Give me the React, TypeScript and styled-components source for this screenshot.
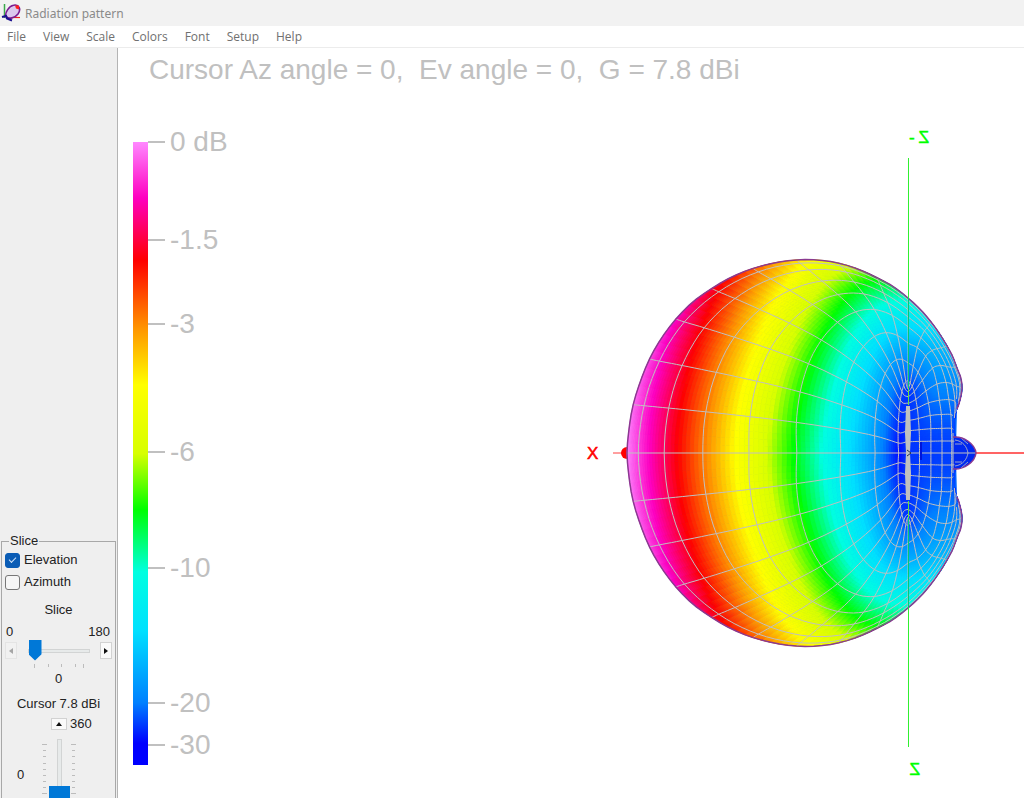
import React, { useState } from "react";
import styled, { createGlobalStyle } from "styled-components";

const GlobalStyle = createGlobalStyle`
  *, *::before, *::after { box-sizing: border-box; }
  html, body { margin: 0; height: 100%; overflow: hidden; background: #fff; }
  #root { height: 100%; }
`;

const Window = styled.div`
  display: flex;
  flex-direction: column;
  height: 100vh;
  overflow: hidden;
  font-family: "Liberation Sans", Arial, sans-serif;
  color: #222;
`;
const TitleBar = styled.header`
  flex: none;
  display: flex;
  align-items: center;
  gap: 4px;
  height: 26px;
  padding-left: 1px;
  background: #f2f2f2;
  font: 12px "Noto Sans", sans-serif;
  color: #8a8a8a;
`;
const MenuBar = styled.nav`
  flex: none;
  display: flex;
  gap: 17px;
  height: 22px;
  padding-left: 7px;
  border-bottom: 1px solid #ececec;
  background: #fff;
`;
const MenuItem = styled.button`
  padding: 0;
  border: 0;
  background: none;
  font: 12px "Open Sans", sans-serif;
  color: #707070;
`;
const Body = styled.div`
  flex: 1;
  display: flex;
  min-height: 0;
`;
const Sidebar = styled.aside`
  flex: none;
  width: 118px;
  padding: 485px 1px 0;
  overflow: hidden;
  background: #efefef;
  border-right: 1px solid #b4b4b4;
`;
const Group = styled.fieldset`
  display: flex;
  flex-direction: column;
  min-width: 0;
  margin: 0;
  height: 340px;
  padding: 0 3px;
  border: 1px solid #a8a8a8;
  font-size: 13px;
  line-height: 16px;
`;
const Legend = styled.legend`
  padding: 0 1px;
  margin-left: 4px;
  line-height: 16px;
`;
const CheckLabel = styled.label`
  display: flex;
  align-items: center;
  gap: 4px;
  height: 22px;
`;
const Check = styled.input`
  appearance: none;
  flex: none;
  width: 15px;
  height: 15px;
  margin: 0;
  border: 1px solid #777;
  border-radius: 3px;
  background: #f6f6f6;
  &:checked {
    border-color: #0a5cb5;
    background: #0a5cb5;
  }
  &:checked::after {
    content: "";
    display: block;
    width: 7px;
    height: 4px;
    margin: 3px 0 0 3px;
    border: solid #cfe3fa;
    border-width: 0 0 1px 1px;
    rotate: -45deg;
  }
`;
const Caption = styled.div<{ $top?: number }>`
  margin-top: ${(p) => p.$top ?? 0}px;
  text-align: center;
`;
const Ends = styled.div`
  display: flex;
  justify-content: space-between;
  margin-top: 6px;
  padding: 0 2px 0 1px;
`;
const SliderRow = styled.div`
  display: flex;
  align-items: center;
  justify-content: space-between;
  height: 21px;
`;
const Step = styled.button<{ $wide?: boolean }>`
  display: flex;
  align-items: center;
  justify-content: center;
  flex: none;
  width: ${(p) => (p.$wide ? 16 : 12)}px;
  height: ${(p) => (p.$wide ? 12 : 17)}px;
  padding: 0;
  border: 1px solid #d2d2d2;
  background: #fafafa;
  color: #111;
  &:disabled {
    border-color: #e4e4e4;
    background: #f1f1f1;
    color: #a5a5a5;
  }
`;
const HSlider = styled.input`
  appearance: none;
  width: 62px;
  height: 21px;
  margin: 0;
  background: none;
  &::-webkit-slider-runnable-track {
    height: 4px;
    border: 1px solid #d2d4d4;
    background: #e7eaea;
  }
  &::-webkit-slider-thumb {
    appearance: none;
    width: 13px;
    height: 21px;
    margin-top: -10px;
    background: #0078d7;
    clip-path: polygon(0 0, 100% 0, 100% 70%, 50% 100%, 0 70%);
  }
`;
const VRow = styled.div`
  display: flex;
  align-items: flex-start;
  gap: 2px;
  margin-top: 7px;
  padding-left: 12px;
`;
const Reading = styled.span`
  width: 23px;
  padding-top: 28px;
`;
const Tower = styled.div`
  display: flex;
  gap: 1px;
`;
const VSlider = styled.input`
  appearance: none;
  writing-mode: vertical-lr;
  direction: rtl;
  width: 22px;
  height: 60px;
  margin: 0;
  background: none;
  &::-webkit-slider-runnable-track {
    width: 5px;
    border: 1px solid #d2d4d4;
    background: #e7eaea;
  }
  &::-webkit-slider-thumb {
    appearance: none;
    width: 21px;
    height: 12px;
    margin-left: -9px;
    background: #0078d7;
  }
`;
const StepRow = styled.div`
  display: flex;
  align-items: center;
  gap: 3px;
  margin-top: 4px;
  padding-left: 46px;
`;
const Plot = styled.main`
  flex: 1;
  display: flex;
  flex-direction: column;
  min-width: 0;
  background: #fff;
`;
const Reading3D = styled.h1`
  flex: none;
  margin: 0;
  padding: 4px 0 0 31px;
  height: 50px;
  font-size: 28px;
  font-weight: 400;
  line-height: 36px;
  white-space: pre;
  color: #c0c0c0;
`;
const Chart = styled.svg`
  flex: 1;
  display: block;
  width: 100%;
  min-height: 0;
  font-family: "Liberation Sans", Arial, sans-serif;
`;

/* ---------- radiation surface ---------- */

const RAD = Math.PI / 180;
const RMAX = 281;

// Catmull-Rom interpolation in an evenly spaced table
const spline = (t: number[], pos: number) => {
  const i = Math.min(t.length - 2, Math.floor(pos));
  const k = pos - i;
  const b = t[i];
  const c = t[i + 1];
  const a = i > 0 ? t[i - 1] : b;
  const d = i + 2 < t.length ? t[i + 2] : c;
  return 0.5 * (2 * b + (c - a) * k + (2 * a - 5 * b + 4 * c - d) * k * k + (3 * b - a - 3 * c + d) * k * k * k);
};

// radius of the vertical cut, every 5 degrees of elevation from 0 to 180
const CUT = [
  281, 280, 279, 277, 275, 272, 268, 263, 256, 249, 241, 232, 223, 213, 202, 190, 178, 167,
  155, 144, 133, 123, 114, 106, 98, 92, 84, 73, 62, 57, 53, 49, 48, 58, 64, 67, 68,
];
// share of the cut's excess radius kept at each azimuth, level with the horizon and overhead
const SIDE = [1, 0.967, 0.9, 0.796, 0.66, 0.5, 0.32, 0.144, -0.05, 0];
const TOP = [1, 0.98, 0.94, 0.87, 0.79, 0.68, 0.5, 0.28, 0.08, 0];
// radii behind the antenna, rows for elevation 100 to 180, columns for azimuth 0 to 90
const REAR = [
  [133, 132, 130, 127, 124, 117, 107, 88, 71, 65],
  [114, 114, 113, 112, 111, 109, 103, 86, 71, 65],
  [98, 98, 99, 99, 100, 101, 98, 84, 71, 65],
  [84, 84, 86, 87, 90, 92, 90, 81, 70, 65],
  [62, 63, 67, 72, 80, 83, 82, 78, 70, 65],
  [53, 54, 56, 60, 70, 77, 77, 75, 69, 65],
  [48, 50, 53, 57, 64, 72, 72, 71, 68, 65],
  [64, 64, 65, 66, 66, 69, 69, 68, 67, 65],
  [68, 68, 68, 68, 68, 68, 68, 67, 66, 65],
];
const GRID: number[][] = [];
for (let e = 0; e <= 9; e++) {
  GRID.push(SIDE.map((s, a) => 65 + (CUT[e * 2] - 65) * (s + ((TOP[a] - s) * e) / 9)));
}
GRID.push(...REAR);

const radius = (el: number, az: number) => {
  const row = Math.abs(el) / 10;
  if (az === 0) return spline(CUT, row * 2);
  const i = Math.min(17, Math.floor(row));
  const [a, b, c, d] = [i - 1, i, i + 1, i + 2].map((n) => spline(GRID[Math.max(0, Math.min(18, n))], az / 10));
  const k = row - i;
  return 0.5 * (2 * b + (c - a) * k + (2 * a - 5 * b + 4 * c - d) * k * k + (3 * b - a - 3 * c + d) * k * k * k);
};
const project = (el: number, az: number) => {
  const f = radius(el, az);
  return [-f * Math.cos(el * RAD) * Math.cos(az * RAD), -f * Math.sin(el * RAD), f];
};

const STOPS: [number, number, number, number][] = [
  [0, 255, 136, 255], [0.09, 255, 0, 192], [0.19, 255, 0, 0], [0.3, 255, 150, 0], [0.39, 255, 255, 0],
  [0.5, 215, 255, 0], [0.59, 0, 255, 0], [0.69, 0, 255, 224], [0.785, 0, 224, 255], [0.9, 0, 128, 255],
  [0.965, 0, 0, 255], [1, 0, 0, 255],
];
const colorAt = (f: number) => {
  const t = 1 - Math.min(1, (f / RMAX) ** 1.9);
  for (let i = 1; i < STOPS.length; i++) {
    if (t <= STOPS[i][0]) {
      const a = STOPS[i - 1];
      const b = STOPS[i];
      const k = (t - a[0]) / (b[0] - a[0]);
      return `rgb(${[1, 2, 3].map((c) => Math.round(a[c] + (b[c] - a[c]) * k)).join(",")})`;
    }
  }
  return "rgb(0,0,255)";
};

const pt = (p: number[]) => `${p[0].toFixed(1)},${p[1].toFixed(1)}`;

const EL_STEP = 2;
const cells: { d: string; fill: string }[] = [];
for (let az = 0; az < 90; az += 1) {
  const limit = az < 40 ? 144 : 180;
  for (let el = -limit; el < limit; el += EL_STEP) {
    const q = [project(el, az), project(el + EL_STEP, az), project(el + EL_STEP, az + 1), project(el, az + 1)];
    cells.push({
      d: q.map(pt).join(" "),
      fill: colorAt((q[0][2] + q[1][2] + q[2][2] + q[3][2]) / 4),
    });
  }
}

const meshLines: string[] = [];
for (let az = 10; az <= 80; az += 10) {
  const limit = az < 40 ? 136 : az === 40 ? 150 : 180;
  const pts: string[] = [];
  for (let el = -limit; el <= limit; el += 2) pts.push(pt(project(el, az)));
  meshLines.push(pts.join(" "));
}
for (let el = -170; el < 180; el += 10) {
  if (el === 0) continue;
  const pts: string[] = [];
  for (let az = Math.abs(el) > 145 ? 46 : 0; az <= 90; az += 2) pts.push(pt(project(el, az)));
  meshLines.push(pts.join(" "));
}

const cutPoints: string[] = [];
for (let el = -138; el <= 138; el += 2) cutPoints.push(pt(project(el, 0)));
const OUTLINE = cutPoints.join(" ");
const BODY = `${OUTLINE} 47,34 45,20 45,-20 47,-34`;
const LOBE = "M45,-16 C56,-17 67,-9 68,0 C67,9 56,17 45,16";

const Surface = () => (
  <g>
    <polygon points={BODY} fill="#0064ff" />
    {cells.map((c, i) => (
      <polygon key={i} points={c.d} fill={c.fill} stroke={c.fill} strokeWidth={0.8} />
    ))}
    <path d={LOBE} fill="#0028f0" />
    <g fill="none" stroke="#c0c0c0" strokeWidth={1}>
      {meshLines.map((p, i) => (
        <polyline key={i} points={p} />
      ))}
      <path d="M47,-13 C55,-12 59,-6 60,0 C59,6 55,12 47,13 M47,-9 H54 M47,9 H54 M53,-15 L60,-9 M53,15 L60,9" strokeWidth={0.8} />
      <path d="M45,-20 V20 M-281,0 H68" />
    </g>
    <path d="M13,-11 V7" stroke="#0014d8" strokeWidth={2} />
    <polyline points={OUTLINE} fill="none" stroke="#8a3a90" strokeWidth={1.5} />
    <path d={LOBE} fill="none" stroke="#8a3a90" strokeWidth={1.5} />
    <path d="M-1,-46 H1 L2,-20 L1,0 L2,20 L1,46 H-1 L-2,20 L-1,0 L-2,-20 Z" fill="#c0c0c0" stroke="#c0c0c0" strokeWidth={2} />
    <path d="M-1,-3 L3,0 L-1,3" fill="none" stroke="#203050" strokeWidth={1} />
  </g>
);

const TICKS: [number, string][] = [
  [0, "0 dB"], [98, "-1.5"], [182, "-3"], [310, "-6"], [426, "-10"], [561, "-20"], [603, "-30"],
];

const Scale = () => (
  <g>
    <defs>
      <linearGradient id="gain" x1="0" y1="0" x2="0" y2="1">
        {STOPS.map(([o, r, g, b]) => (
          <stop key={o} offset={o} stopColor={`rgb(${r},${g},${b})`} />
        ))}
      </linearGradient>
    </defs>
    <rect width={15} height={623} fill="url(#gain)" />
    {TICKS.map(([y, label]) => (
      <g key={label}>
        <path d={`M15,${y} h17`} stroke="#c0c0c0" strokeWidth={2} />
        <text x={37} y={y + 9} fontSize={28} fill="#c0c0c0">
          {label}
        </text>
      </g>
    ))}
  </g>
);

const AppIcon = () => (
  <svg width={20} height={20} viewBox="0 0 20 20" aria-hidden="true">
    <path d="M3.5 1V15" stroke="#3aa84a" strokeWidth={1.5} />
    <path d="M8 14.500H19" stroke="#f02020" strokeWidth={1.200} />
    <path d="M5 13.500C3.500 10 8 3 12.500 2.200C18 1 20.500 6 17 11C14 15 8 16.500 5 13.500Z" fill="#dcc8ee" stroke="#7a1a90" strokeWidth={1.600} />
    <path d="M14 2.500H18V6.500L15 5.500Z" fill="#ff2020" />
    <path d="M1 14L5 13L6 15.500L11 17.500" fill="none" stroke="#1c1090" strokeWidth={2.200} />
  </svg>
);

const SideTicks = () => (
  <svg width={5} height={60} aria-hidden="true">
    <path d="M0 5.500h5M1 11.500h3M1 17.500h3M1 24.500h3M1 30.500h3M1 36.500h3M1 42.500h3M1 48.500h3M0 54.500h5" stroke="#bcbcbc" />
  </svg>
);

const MENUS = ["File", "View", "Scale", "Colors", "Font", "Setup", "Help"];

export default function App() {
  const [elevation, setElevation] = useState(true);
  const [azimuth, setAzimuth] = useState(false);
  const [slice, setSlice] = useState(0);
  const [cursor, setCursor] = useState(0);
  return (
    <Window>
      <GlobalStyle />
      <TitleBar>
        <AppIcon />
        <span>Radiation pattern</span>
      </TitleBar>
      <MenuBar>
        {MENUS.map((m) => (
          <MenuItem key={m} type="button">{m}</MenuItem>
        ))}
      </MenuBar>
      <Body>
        <Sidebar>
          <Group>
            <Legend>Slice</Legend>
            <CheckLabel>
              <Check type="checkbox" checked={elevation} onChange={(e) => setElevation(e.target.checked)} />
              Elevation
            </CheckLabel>
            <CheckLabel>
              <Check type="checkbox" checked={azimuth} onChange={(e) => setAzimuth(e.target.checked)} />
              Azimuth
            </CheckLabel>
            <Caption $top={9}>Slice</Caption>
            <Ends>
              <span>0</span>
              <span>180</span>
            </Ends>
            <SliderRow>
              <Step type="button" disabled aria-label="Previous slice">
                <svg width={4} height={6}><path d="M4 0V6L0 3Z" fill="currentColor" /></svg>
              </Step>
              <HSlider type="range" min={0} max={180} value={slice} aria-label="Slice" onChange={(e) => setSlice(+e.target.value)} />
              <Step type="button" aria-label="Next slice">
                <svg width={4} height={6}><path d="M0 0V6L4 3Z" fill="currentColor" /></svg>
              </Step>
            </SliderRow>
            <svg width={108} height={10} aria-hidden="true">
              <path d="M29.500 3v4M43.500 3v3M56.500 3v3M70.500 3v3M78.500 3v4" stroke="#bcbcbc" />
            </svg>
            <Caption>{slice}</Caption>
            <Caption $top={9}>Cursor 7.8 dBi</Caption>
            <StepRow>
              <Step type="button" $wide aria-label="Increase cursor angle">
                <svg width={6} height={4}><path d="M0 4H6L3 0Z" fill="currentColor" /></svg>
              </Step>
              <span>360</span>
            </StepRow>
            <VRow>
              <Reading>{cursor}</Reading>
              <Tower>
                <SideTicks />
                <VSlider type="range" min={0} max={360} value={cursor} aria-label="Cursor" onChange={(e) => setCursor(+e.target.value)} />
                <SideTicks />
              </Tower>
            </VRow>
          </Group>
        </Sidebar>
        <Plot>
          <Reading3D>{"Cursor Az angle = 0,  Ev angle = 0,  G = 7.8 dBi"}</Reading3D>
          <Chart role="img" aria-label="Radiation pattern">
            <g transform="translate(15,44)">
              <Scale />
            </g>
            <svg x={790} y={355} overflow="visible">
              <line x1={67} x2="100%" y1={0} y2={0} stroke="#ff6464" strokeWidth={2} />
              <path d="M-295,0 H-281" stroke="#ff4040" strokeWidth={1} />
              <circle cx={-281} cy={0} r={6} fill="#ff0000" />
              <Surface />
              <g shapeRendering="crispEdges" strokeWidth={1}>
                <path d="M0,-295 V-155 M0,155 V294" stroke="#30f030" />
                <path d="M0,-155 V-65 M0,65 V155" stroke="#00c878" />
                <path d="M0,-65 V-48 M0,48 V65" stroke="#60e040" />
              </g>
              <text x={-321} y={6} fontSize={17} fill="#ff0000" stroke="#ff0000" strokeWidth={0.5}>X</text>
              <g fontSize={17} fill="#00ff00" stroke="#00ff00" strokeWidth={0.5}>
                <text x={1} y={-310}>-</text>
                <text transform="translate(21,-310) scale(-1,1)">Z</text>
                <text transform="translate(12,322) scale(-1,1)">Z</text>
              </g>
            </svg>
          </Chart>
        </Plot>
      </Body>
    </Window>
  );
}
